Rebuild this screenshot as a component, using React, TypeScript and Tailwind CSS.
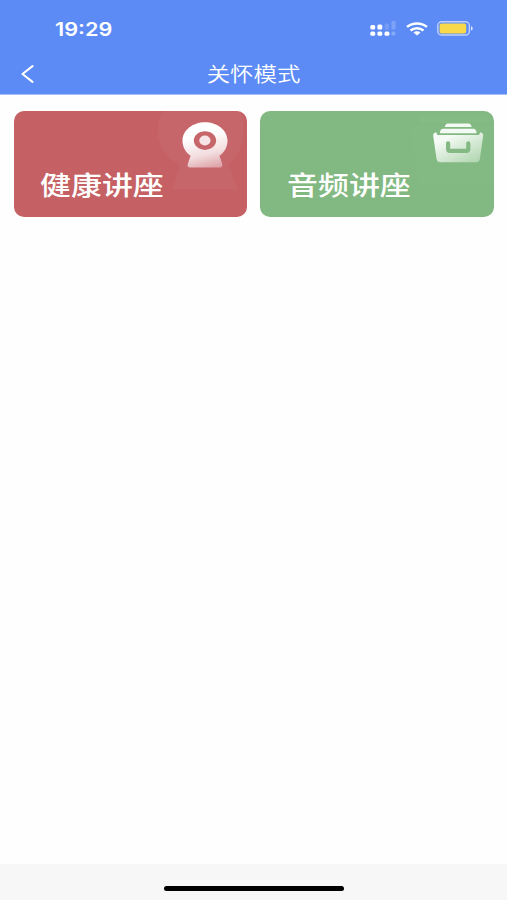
import React from "react";

const SignalIcon: React.FC = () => (
  <svg width="26" height="16" viewBox="0 0 26 16" fill="white">
    <rect x="0.3" y="4" width="4.9" height="4.6" rx="1.5" />
    <rect x="7.4" y="3.4" width="4.9" height="5.2" rx="1.5" />
    <rect x="14.7" y="2.4" width="4.2" height="6.4" rx="1" opacity="0.16" />
    <rect x="21.4" y="0" width="4.2" height="8.6" rx="1" opacity="0.2" />
    <rect x="0.3" y="10.4" width="4.9" height="4.4" rx="1.5" />
    <rect x="7.4" y="10.4" width="4.9" height="4.4" rx="1.5" />
    <rect x="14.5" y="10.4" width="4.9" height="4.4" rx="1.5" />
    <rect x="21.4" y="10.4" width="4" height="4.2" rx="1.4" opacity="0.25" />
  </svg>
);

const WifiIcon: React.FC = () => (
  <svg width="22" height="14" viewBox="0 0 22 14" fill="none" stroke="white" strokeWidth="2.5">
    <path d="M1 4.9C6.6 0.2 15.4 0.2 21 4.9" />
    <path d="M4.5 8.5C8.2 5.5 13.8 5.5 17.5 8.5" />
    <path d="M7.5 10.6C9.4 8.9 12.6 8.9 14.5 10.6L11 13.6Z" fill="white" stroke="none" />
  </svg>
);

const BatteryIcon: React.FC = () => (
  <svg width="37" height="15" viewBox="0 0 37 15" fill="none">
    <rect x="0.8" y="0.8" width="31.6" height="13.2" rx="3.8" stroke="white" strokeOpacity="0.6" strokeWidth="1.4" />
    <rect x="2.6" y="2.5" width="26.6" height="9.9" rx="2" fill="#f8d949" />
    <path d="M34 5.2C36.3 5.8 36.3 9 34 9.6Z" fill="white" fillOpacity="0.75" />
  </svg>
);

const WebcamIcon: React.FC = () => (
  <svg width="46" height="46" viewBox="0 0 46 46" fill="none">
    <defs>
      <linearGradient id="webcam" x1="16" y1="5" x2="27" y2="48" gradientUnits="userSpaceOnUse">
        <stop offset="0.2" stopColor="white" />
        <stop offset="0.65" stopColor="#f2dcde" />
        <stop offset="1" stopColor="#dc9ea3" />
      </linearGradient>
    </defs>
    <path
      fill="url(#webcam)"
      fillRule="evenodd"
      d="M23 0.2C35.4 0.2 45.5 8.3 45.5 18.6C45.5 25.2 42.2 30.7 37.5 33.8L40.2 42C40.8 44 39.8 45.5 37.8 45.5H8.1C6.1 45.5 5.1 44 5.8 42L8.6 33.8C3.8 30.7 0.5 25.2 0.5 18.6C0.5 8.3 10.6 0.2 23 0.2ZM23 9.3C16.8 9.3 11.8 13.5 11.8 18.6C11.8 23.7 16.8 27.9 23 27.9C29.2 27.9 34.2 23.7 34.2 18.6C34.2 13.5 29.2 9.3 23 9.3Z"
    />
    <ellipse cx="22.9" cy="18.5" rx="5.6" ry="4.9" fill="#f6e4e6" />
  </svg>
);

const DrawerIcon: React.FC = () => (
  <svg width="52" height="40" viewBox="0 0 52 40" fill="none">
    <defs>
      <linearGradient id="drawer" x1="18" y1="9" x2="34" y2="42" gradientUnits="userSpaceOnUse">
        <stop offset="0.1" stopColor="#f5faf5" />
        <stop offset="1" stopColor="#b5d8b5" />
      </linearGradient>
    </defs>
    <path d="M16 0.4H36.4C38.2 0.4 39.4 1.9 39.6 4H12.8C13 1.9 14.2 0.4 16 0.4Z" fill="#f3f9f3" />
    <path d="M11 5.8H41.4C43.3 5.8 44.5 7.6 44.6 10.3H7.8C7.9 7.6 9.1 5.8 11 5.8Z" fill="#f3f9f3" />
    <path
      d="M4.2 9.2L5.4 12.1H47L48.2 9.2C50.3 9.5 51.5 10.7 51.2 12.8L47.9 35.8C47.5 38.2 46.2 39.3 43.8 39.3H8.6C6.2 39.3 4.9 38.2 4.5 35.8L1.2 12.8C0.9 10.7 2.1 9.5 4.2 9.2Z"
      fill="url(#drawer)"
    />
    <path d="M16.1 20.3V26.1C16.1 27.3 16.9 27.9 18 27.9H34.4C35.5 27.9 36.3 27.3 36.3 26.1V20.3" stroke="#84b983" strokeWidth="4.2" strokeLinecap="round" />
  </svg>
);

const StatusBar: React.FC = () => (
  <div className="flex h-[54px] items-start justify-between pl-[55px] pr-[33px] text-white">
    <span className="mt-[17px] origin-left scale-x-[1.14] font-['Inter','Liberation_Sans',sans-serif] text-[19px] leading-[25px] font-semibold">
      19:29
    </span>
    <div className="mt-[21px] flex items-start">
      <SignalIcon />
      <div className="ml-[10px] mt-px">
        <WifiIcon />
      </div>
      <div className="ml-[9px]">
        <BatteryIcon />
      </div>
    </div>
  </div>
);

const NavBar: React.FC = () => (
  <div className="grid h-10 grid-cols-[60px_1fr_60px] items-center text-white">
    <button aria-label="返回" className="flex pl-[21px]">
      <svg width="13" height="18" viewBox="0 0 13 18" fill="none" stroke="white" strokeWidth="2.1" strokeLinecap="round" strokeLinejoin="round">
        <path d="M11.5 1.2L1.5 9L11.5 16.8" />
      </svg>
    </button>
    <h1 className="scale-x-[1.17] text-center text-[20px] leading-10 font-[350]">关怀模式</h1>
  </div>
);

interface CardProps {
  title: string;
  className: string;
  glow: React.ReactNode;
  children: React.ReactNode;
}

const Card: React.FC<CardProps> = ({ title, className, glow, children }) => (
  <button className={`relative flex h-[106px] flex-1 flex-col overflow-hidden rounded-[10px] text-left text-white ${className}`}>
    <svg className="absolute inset-0" width="234" height="106" viewBox="0 0 234 106">
      {glow}
    </svg>
    <div className="relative flex h-14 w-full justify-end">{children}</div>
    <span className="relative ml-[26.5px] origin-left scale-x-[1.19] text-[26px] leading-[34px] font-medium">
      {title}
    </span>
  </button>
);

export default function App() {
  return (
    <div className="flex h-screen w-full flex-col overflow-hidden bg-[#fefefe] font-['Noto_Sans_CJK_SC',sans-serif]">
      <header className="h-[95px] border-b border-[#a9c0fa] bg-[#5c8bf5]">
        <StatusBar />
        <NavBar />
      </header>

      <main className="flex flex-1 items-start gap-[13px] px-[13.5px] pt-4">
        <Card
          title="健康讲座"
          className="bg-[#c56064]"
          glow={
            <g fill="#d08084" opacity="0.2">
              <path d="M150 0H226C232 10 232 42 214 54L224 78H158L166 54C142 42 138 16 150 0Z" />
            </g>
          }
        >
          <div className="mt-[11px] mr-[19px]">
            <WebcamIcon />
          </div>
        </Card>
        <Card
          title="音频讲座"
          className="bg-[#82b881]"
          glow={
            <g fill="#93c58f">
              <rect x="158" y="4" width="72" height="8" rx="4" opacity="0.2" />
              <path d="M150 14H234V74H158Z" opacity="0.1" />
            </g>
          }
        >
          <div className="mt-[12px] mr-[10px]">
            <DrawerIcon />
          </div>
        </Card>
      </main>

      <footer className="flex h-9 items-start justify-center bg-[#f7f7f7] pt-[22px]">
        <div className="h-[5px] w-[180px] rounded-full bg-black" />
      </footer>
    </div>
  );
}
